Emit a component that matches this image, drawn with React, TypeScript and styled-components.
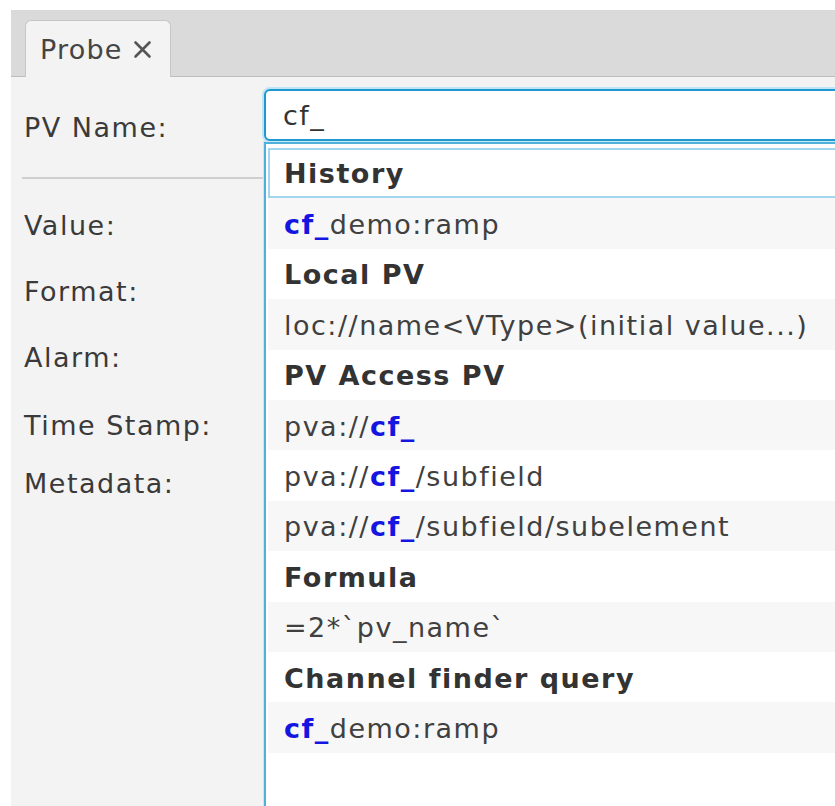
import React from 'react';
import styled, {createGlobalStyle} from 'styled-components';

const GlobalStyle = createGlobalStyle`
  html, body {
    margin: 0;
    padding: 0;
    background: #ffffff;
  }

  body {
    font-family: "DejaVu Sans", Verdana, sans-serif;
    font-size: 27px;
    letter-spacing: 1.5px;
    color: #3a3a3a;
  }
`;

const Page = styled.div`
  width: 835px;
  height: 806px;
  padding: 10px 0 0 11px;
  box-sizing: border-box;
  overflow: hidden;
`;

const Window = styled.div`
  display: flex;
  flex-direction: column;
  width: 900px;
  height: 796px;
  background: #f3f3f3;
`;

const TabBar = styled.div`
  display: flex;
  align-items: flex-end;
  height: 67px;
  padding-left: 14px;
  background: #dadada;
  border-bottom: 1px solid #bcbcbc;
  box-sizing: border-box;
`;

const Tab = styled.div`
  display: flex;
  align-items: center;
  gap: 10px;
  height: 57px;
  margin-bottom: -1px;
  padding: 0 18px 0 14px;
  background: #f3f3f3;
  border: 1px solid #c6c6c6;
  border-bottom: none;
  border-radius: 6px 6px 0 0;
  color: #444;
  letter-spacing: 1.2px;
  box-sizing: border-box;
`;

const CloseIcon = () => (
  <svg width="19" height="19" viewBox="0 0 19 19">
    <path d="M2.5 2.5 L16.5 16.5 M16.5 2.5 L2.5 16.5" stroke="#555" strokeWidth="2.6" strokeLinecap="round"/>
  </svg>
);

const Form = styled.div`
  display: grid;
  grid-template-columns: 253px 1fr;
  padding-top: 12px;
`;

const Label = styled.div<{$top?: number; $height?: number}>`
  display: flex;
  align-items: center;
  height: ${({$height}) => $height ?? 66}px;
  padding-left: 13px;
  padding-top: ${({$top}) => $top ?? 0}px;
  line-height: 32px;
  box-sizing: border-box;
`;

const Field = styled.div`
  position: relative;
`;

const Input = styled.div`
  display: flex;
  align-items: center;
  height: 52px;
  padding-left: 17px;
  background: #fff;
  border: 2px solid #1e98cf;
  border-radius: 6px;
  box-shadow: 0 0 0 2px #bfe4f5;
  box-sizing: border-box;
  color: #333;
`;

const Separator = styled.div`
  grid-column: 1 / -1;
  height: 2px;
  margin: 36px 0 14px 11px;
  background: #cfcfcf;
`;

const Popup = styled.div`
  position: absolute;
  top: 53px;
  left: 0;
  right: 0;
  height: 700px;
  padding: 4px 0 0 2px;
  background: #fff;
  border: 2px solid #4fb0da;
  box-shadow: 0 0 0 1px #c8e8f6;
  box-sizing: border-box;
  z-index: 2;
`;

const Row = styled.div<{$shade?: boolean; $header?: boolean; $selected?: boolean}>`
  display: flex;
  align-items: center;
  height: 50.4px;
  padding: 2px 0 0 16px;
  background: ${({$shade}) => ($shade ? '#f7f7f7' : '#fff')};
  font-weight: ${({$header}) => ($header ? 700 : 400)};
  color: ${({$header}) => ($header ? '#333' : '#404040')};
  white-space: pre;
  box-sizing: border-box;
  ${({$selected}) => $selected && `
    border: 2px solid #a2d6ee;
    padding: 0 0 0 14px;
  `}
`;

const Match = styled.span`
  color: #1515e2;
  font-weight: 700;
`;

type Item = {header?: boolean; before?: string; match?: string; after?: string};

const items: Item[] = [
  {header: true, after: 'History'},
  {match: 'cf_', after: 'demo:ramp'},
  {header: true, after: 'Local PV'},
  {after: 'loc://name<VType>(initial value...)'},
  {header: true, after: 'PV Access PV'},
  {before: 'pva://', match: 'cf_'},
  {before: 'pva://', match: 'cf_', after: '/subfield'},
  {before: 'pva://', match: 'cf_', after: '/subfield/subelement'},
  {header: true, after: 'Formula'},
  {after: '=2*`pv_name`'},
  {header: true, after: 'Channel finder query'},
  {match: 'cf_', after: 'demo:ramp'},
];

export default function App() {
  return (
    <Page>
      <GlobalStyle/>
      <Window>
        <TabBar>
          <Tab>
            <span>Probe</span>
            <CloseIcon/>
          </Tab>
        </TabBar>
        <Form>
          <Label $top={26} $height={52}>PV Name:</Label>
          <Field>
            <Input>cf_</Input>
            <Popup>
              {items.map((item, i) => (
                <Row key={i} $shade={i % 2 === 1} $header={item.header} $selected={i === 0}>
                  {item.before}
                  {item.match && <Match>{item.match}</Match>}
                  {item.after}
                </Row>
              ))}
            </Popup>
          </Field>
          <Separator/>
          <Label>Value:</Label>
          <div/>
          <Label>Format:</Label>
          <div/>
          <Label>Alarm:</Label>
          <div/>
          <Label $top={4}>Time Stamp:</Label>
          <div/>
          <Label $height={50} $top={4}>Metadata:</Label>
          <div/>
        </Form>
      </Window>
    </Page>
  );
}
